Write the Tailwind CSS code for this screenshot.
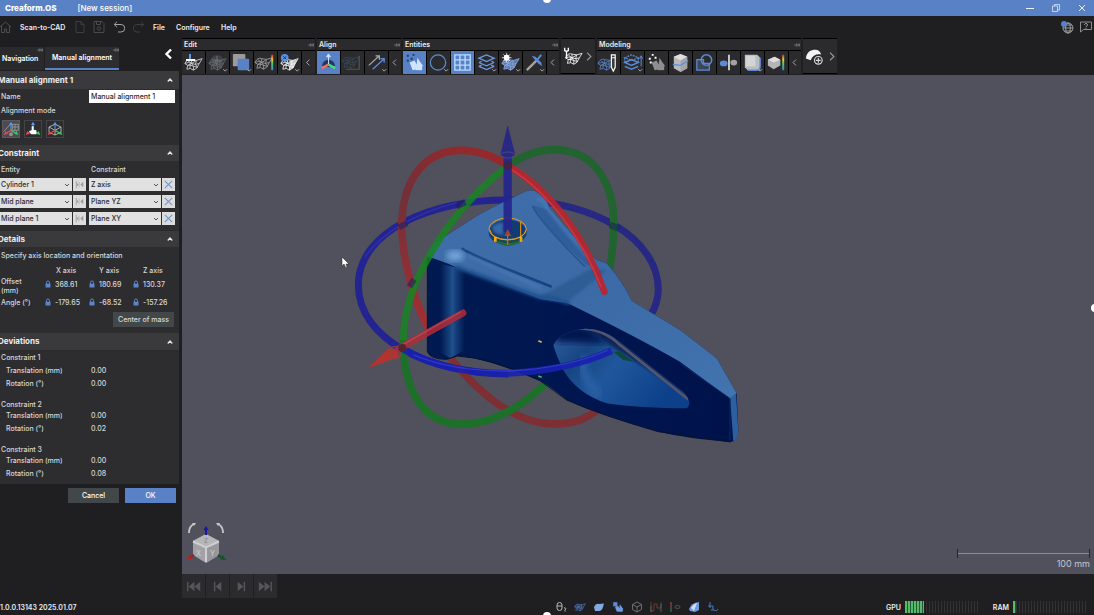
<!DOCTYPE html>
<html lang="en">
<head>
<meta charset="UTF-8" />
<meta name="viewport" content="width=device-width, initial-scale=1.0" />
<title>Creaform.OS - [New session]</title>
<script src="https://cdn.jsdelivr.net/npm/@tailwindcss/browser@4"></script>
</head>

<body class="relative flex h-screen flex-col overflow-hidden bg-[#1f1f21] font-['Inter',sans-serif] text-[7px] font-medium leading-[9px] text-[#d8d8da]">

<!-- shared icon shapes -->
<svg class="hidden">
  <symbol id="mesh" viewBox="0 0 24 24">
    <path d="M3 13Q6 7 10 9Q15 11 21 8L18 13Q16 19 12 20Q9 17 5 19L6 15zM3 13Q7 11 10 13Q14 15 18 13M6 15Q9 14 12 16L16 17M10 9L10 13 12 16 12 20M15 10L14 14 16 17M6 10L10 13 15 10M6 15L10 13M9 14L8 18" fill="none" stroke="currentColor" stroke-width=".9"/>
  </symbol>
  <symbol id="axes" viewBox="0 0 24 24">
    <path d="M12 14V5" stroke="#5b9be8" stroke-width="1.6"/><path d="M12 1l3 5h-6z" fill="#5b9be8"/>
    <path d="M12 14l-7 4" stroke="#e5484d" stroke-width="2"/><path d="M1 21l2.500-6 4 4z" fill="#e5484d"/>
    <path d="M12 14l7 4" stroke="#3cc860" stroke-width="2"/><path d="M23 21l-6.500-2 4-4z" fill="#3cc860"/>
  </symbol>
  <symbol id="more" viewBox="0 0 24 24"><path d="M18 19l2 2 2-2" fill="none" stroke="#a9a9ab"/></symbol>
  <symbol id="pin" viewBox="0 0 8 8"><path d="M0 4h3M3 2v4M3 3h4v2H3M7 2v4" fill="none" stroke="#8c8c8e" stroke-width=".8"/></symbol>
  <symbol id="up" viewBox="0 0 8 8"><path d="M2.200 5.200L4 3.200l1.800 2" fill="none" stroke="#e6e6e8" stroke-width="1"/></symbol>
  <symbol id="down" viewBox="0 0 8 8"><path d="M2 3l2 2 2-2" fill="none" stroke="#444" stroke-width=".9"/></symbol>
  <symbol id="mirror" viewBox="0 0 14 14"><path d="M6.500 4v6" stroke="#b5b5b5"/><path d="M3.500 3v8" stroke="#999" stroke-width=".8"/><path d="M4 5l2 2-2 2zM11 4L8 7l3 3z" fill="#9a9a9c"/></symbol>
  <symbol id="cross" viewBox="0 0 14 14"><path d="M3 3l8 8M11 3l-8 8" stroke="#6e93d2" stroke-width="1.100"/></symbol>
  <symbol id="lock" viewBox="0 0 8 8"><path d="M2.500 4V2.500a1.500 1.500 0 013 0V4" fill="none" stroke="#5b85cc"/><path d="M1.500 3.700h5v3.800h-5z" fill="#5b85cc"/></symbol>
  <symbol id="cube" viewBox="0 0 24 24"><path d="M12 3l7 3v12l-7 4-7-4V6z" fill="#b9b9bb"/><path d="M12 3l7 3-7 4-7-4z" fill="#dededf"/><path d="M12 10l7-4v12l-7 4z" fill="#a5a5a7"/></symbol>
  <symbol id="shapes" viewBox="0 0 24 24"><path d="M15 7l6 9-7 1z"/><path d="M13 14h7v6h-7z"/><path d="M7 12l5-2 3 5-1 4-4 1z"/></symbol>
</svg>

<!-- title bar -->
<header class="flex h-4 shrink-0 items-center bg-[#5882c5] pl-[5px] text-white">
  <h1 class="text-[8px] font-extrabold">Creaform.OS</h1>
  <span class="ml-[21px] text-[8px]">[New session]</span>
  <div class="ml-auto flex items-center gap-[14px] pr-[6px]">
    <button aria-label="Minimize"><svg class="size-3" viewBox="0 0 12 12"><path d="M2 6.500h8" stroke="#fff" stroke-width=".9"/></svg></button>
    <button aria-label="Restore"><svg class="size-3" viewBox="0 0 12 12"><path d="M2.500 4h5v5.500h-5zM4.500 4V2.500h5v5.500h-2" fill="none" stroke="#dfe8f6" stroke-width=".8"/></svg></button>
    <button aria-label="Close"><svg class="size-3" viewBox="0 0 12 12"><path d="M3 3l6 6M9 3L3 9" stroke="#fff" stroke-width=".9"/></svg></button>
  </div>
</header>

<!-- menu bar -->
<nav class="flex h-[22px] shrink-0 items-center text-[7px] font-semibold text-[#ededee]">
  <button class="w-5" aria-label="Home"><svg class="size-3" viewBox="0 0 12 12"><path d="M0 6l5.500-5L11 6M1.500 5v6.500h3V8h2v3.500h3V5" fill="none" stroke="#4d4d50"/></svg></button>
  <a href="#" class="w-[54px]">Scan-to-CAD</a>
  <button class="w-[19px]" aria-label="New"><svg class="size-3" viewBox="0 0 12 12"><path d="M2 .5h5l3 3v8H2zM7 .5v3h3" fill="none" stroke="#3e3e41"/></svg></button>
  <button class="w-5" aria-label="Save"><svg class="size-3" viewBox="0 0 12 12"><path d="M1 .5h8l2 2v9H1zM3.500.5v3h4v-3" fill="none" stroke="#4a4a4d"/><circle cx="6" cy="7.500" r="1.700" fill="none" stroke="#4a4a4d"/></svg></button>
  <button class="w-5" aria-label="Undo"><svg class="size-3" viewBox="0 0 12 12"><path d="M4 .8L1.200 3.500 4 6.200M1.500 3.500H8a3.500 3.500 0 010 7.500H5" fill="none" stroke="#a2a2a4"/></svg></button>
  <button class="w-5" aria-label="Redo"><svg class="size-3" viewBox="0 0 12 12"><path d="M8 .8l2.800 2.700L8 6.200M10.500 3.500H4A3.500 3.500 0 004 11h3" fill="none" stroke="#3e3e41"/></svg></button>
  <a href="#" class="w-[23px]">File</a>
  <a href="#" class="w-[45px]">Configure</a>
  <a href="#">Help</a>
  <div class="ml-auto flex items-center gap-[6px] pr-[2px]">
    <button aria-label="Language"><svg class="size-[14px]" viewBox="0 0 14 14"><g fill="none" stroke="#a5a5a7" stroke-width=".9"><circle cx="8" cy="8" r="5"/><ellipse cx="8" cy="8" rx="2.300" ry="5"/><path d="M3 8h10M4 5h8M4 11h8"/></g><circle cx="4" cy="4" r="3" fill="#5882c5"/></svg></button>
    <button aria-label="Support"><svg class="size-3" viewBox="0 0 12 12"><path d="M.5 1h11v7.500h-8L.5 11z" fill="none" stroke="#8e8e90"/><path d="M4.500 4c0-2 3-2 3 0 0 1-1.500 1-1.500 2M6 6.800v1" fill="none" stroke="#bbb" stroke-width=".9"/></svg></button>
  </div>
</nav>

<main class="flex min-h-0 flex-1">

  <!-- side panel -->
  <aside class="mr-[2px] w-[180px] shrink-0">
    <div class="flex h-[33px] items-end pb-px text-[7px] font-semibold text-white">
      <button class="relative h-[23px] w-[44px] bg-[#2a2a2c] pl-[2px] text-left">Navigation<svg class="absolute top-0 right-px size-[6px]"><use href="#pin"/></svg></button>
      <button class="relative ml-px h-[23px] w-[74px] border-b-2 border-[#5882c5] bg-[#2d2d2f] text-center">Manual alignment<svg class="absolute top-0 right-0 size-[6px]"><use href="#pin"/></svg></button>
      <button class="mb-[8px] ml-auto mr-[7px]" aria-label="Collapse panel"><svg class="h-4 w-[10px]" viewBox="0 0 10 16"><path d="M8 3.500L3.500 8 8 12.500" fill="none" stroke="#fff" stroke-width="2.400"/></svg></button>
    </div>

    <div class="w-[179px] bg-[#2d2d2f]">
      <section class="h-[74px]">
        <h2 class="flex h-[18px] items-center justify-between bg-[#3a3a3c] pr-1 text-[8px] font-bold text-[#ececee]"><span class="-ml-[2px]">Manual alignment 1</span><svg class="size-[10px]"><use href="#up"/></svg></h2>
        <div class="mt-px flex items-center pl-px">
          <label for="name" class="w-[88px]">Name</label>
          <input id="name" value="Manual alignment 1" class="h-[13px] w-[86px] bg-white px-[2px] text-[#2b2b2d]">
        </div>
        <p class="mt-[3px] pl-px">Alignment mode</p>
        <div class="mt-[5px] flex gap-1 pl-[2px]">
          <button class="size-[18px] border border-[#5a5a62] bg-[#4b4b53]" aria-label="Entities"><svg class="size-4" viewBox="0 0 24 24"><path d="M1 16L10 6M14 5h9v9h-9zM18 5v9M14 9h9" fill="none" stroke="#9a9a9d" stroke-width="1.300"/><circle cx="12" cy="20" r="3" fill="#909093"/><use href="#axes"/></svg></button>
          <button class="size-[18px] border border-[#444448]" aria-label="Pointer"><svg class="size-4" viewBox="0 0 24 24"><use href="#axes"/><path d="M10 8h3v5l4 1v6H9l-3-5 4-1z" fill="#fff"/></svg></button>
          <button class="size-[18px] border border-[#444448]" aria-label="Box"><svg class="size-4" viewBox="0 0 24 24"><path d="M3 9l9-4 9 4v8l-9 4-9-4zM3 9l9 5 9-5M12 14v7" fill="none" stroke="#c0c0c2" stroke-width="1.300"/><use href="#axes"/></svg></button>
        </div>
      </section>

      <section class="h-[86px]">
        <h2 class="flex h-4 items-center justify-between bg-[#3a3a3c] pr-1 text-[8px] font-bold text-[#ececee]"><span class="-ml-[2px]">Constraint</span><svg class="size-[10px]"><use href="#up"/></svg></h2>
        <div class="grid h-[17px] grid-cols-2 items-center gap-[2px] pl-px"><span>Entity</span><span>Constraint</span></div>
        <div class="space-y-1 text-[#2b2b2d]">
          <div class="flex h-[13px]">
            <div class="relative"><select aria-label="Entity 1" class="h-[13px] w-[72px] appearance-none bg-[#e1e1e1] pl-px"><option>Cylinder 1</option></select><svg class="pointer-events-none absolute right-px top-[3px] size-2"><use href="#down"/></svg></div>
            <button class="ml-px w-[13px] bg-[#dcdcdc]" aria-label="Flip 1"><svg class="size-[13px]"><use href="#mirror"/></svg></button>
            <div class="relative ml-[3px]"><select aria-label="Constraint 1" class="h-[13px] w-[72px] appearance-none bg-[#e1e1e1] pl-[2px]"><option>Z axis</option></select><svg class="pointer-events-none absolute right-px top-[3px] size-2"><use href="#down"/></svg></div>
            <button class="ml-px w-[13px] bg-[#dcdcdc]" aria-label="Remove 1"><svg class="size-[13px]"><use href="#cross"/></svg></button>
          </div>
          <div class="flex h-[13px]">
            <div class="relative"><select aria-label="Entity 2" class="h-[13px] w-[72px] appearance-none bg-[#e1e1e1] pl-px"><option>Mid plane</option></select><svg class="pointer-events-none absolute right-px top-[3px] size-2"><use href="#down"/></svg></div>
            <button class="ml-px w-[13px] bg-[#dcdcdc]" aria-label="Flip 2"><svg class="size-[13px]"><use href="#mirror"/></svg></button>
            <div class="relative ml-[3px]"><select aria-label="Constraint 2" class="h-[13px] w-[72px] appearance-none bg-[#e1e1e1] pl-[2px]"><option>Plane YZ</option></select><svg class="pointer-events-none absolute right-px top-[3px] size-2"><use href="#down"/></svg></div>
            <button class="ml-px w-[13px] bg-[#dcdcdc]" aria-label="Remove 2"><svg class="size-[13px]"><use href="#cross"/></svg></button>
          </div>
          <div class="flex h-[13px]">
            <div class="relative"><select aria-label="Entity 3" class="h-[13px] w-[72px] appearance-none bg-[#e1e1e1] pl-px"><option>Mid plane 1</option></select><svg class="pointer-events-none absolute right-px top-[3px] size-2"><use href="#down"/></svg></div>
            <button class="ml-px w-[13px] bg-[#dcdcdc]" aria-label="Flip 3"><svg class="size-[13px]"><use href="#mirror"/></svg></button>
            <div class="relative ml-[3px]"><select aria-label="Constraint 3" class="h-[13px] w-[72px] appearance-none bg-[#e1e1e1] pl-[2px]"><option>Plane XY</option></select><svg class="pointer-events-none absolute right-px top-[3px] size-2"><use href="#down"/></svg></div>
            <button class="ml-px w-[13px] bg-[#dcdcdc]" aria-label="Remove 3"><svg class="size-[13px]"><use href="#cross"/></svg></button>
          </div>
        </div>
      </section>

      <section class="h-[102px]">
        <h2 class="flex h-4 items-center justify-between bg-[#3a3a3c] pr-1 text-[8px] font-bold text-[#ececee]"><span class="-ml-[2px]">Details</span><svg class="size-[10px]"><use href="#up"/></svg></h2>
        <p class="mt-1 pl-px">Specify axis location and orientation</p>
        <table class="mt-[3px] w-[176px] table-fixed text-left">
          <thead>
            <tr class="h-[14px]"><th class="p-0"></th><th class="p-0 pl-[12px] font-medium">X axis</th><th class="p-0 pl-[11px] font-medium">Y axis</th><th class="p-0 pl-[11px] font-medium">Z axis</th></tr>
          </thead>
          <tbody>
            <tr class="h-[18px]">
              <th class="p-0 pl-px pr-2 font-medium leading-[9px]">Offset (mm)</th>
              <td class="p-0 pb-1"><span class="flex items-center gap-[3px]"><svg class="size-2"><use href="#lock"/></svg>368.61</span></td>
              <td class="p-0 pb-1"><span class="flex items-center gap-[3px]"><svg class="size-2"><use href="#lock"/></svg>180.69</span></td>
              <td class="p-0 pb-1"><span class="flex items-center gap-[3px]"><svg class="size-2"><use href="#lock"/></svg>130.37</span></td>
            </tr>
            <tr class="h-[14px]">
              <th class="p-0 pl-px font-medium">Angle (°)</th>
              <td class="p-0"><span class="flex items-center gap-[3px]"><svg class="size-2"><use href="#lock"/></svg>-179.65</span></td>
              <td class="p-0"><span class="flex items-center gap-[3px]"><svg class="size-2"><use href="#lock"/></svg>-68.52</span></td>
              <td class="p-0"><span class="flex items-center gap-[3px]"><svg class="size-2"><use href="#lock"/></svg>-157.26</span></td>
            </tr>
          </tbody>
        </table>
        <button class="ml-auto mr-[5px] mt-[3px] block h-[15px] w-[61px] bg-[#424749] text-center">Center of mass</button>
      </section>

      <section class="h-[151px]">
        <h2 class="flex h-[17px] items-center justify-between bg-[#3a3a3c] pr-1 text-[8px] font-bold text-[#ececee]"><span class="-ml-[2px]">Deviations</span><svg class="size-[10px]"><use href="#up"/></svg></h2>
        <div class="space-y-3 pl-px pt-[3px]">
          <div>
            <h3>Constraint 1</h3>
            <dl class="mt-1 grid grid-cols-[85px_1fr] gap-y-1 pl-[5px]"><dt>Translation (mm)</dt><dd>0.00</dd><dt>Rotation (°)</dt><dd>0.00</dd></dl>
          </div>
          <div>
            <h3>Constraint 2</h3>
            <dl class="mt-[2px] grid grid-cols-[85px_1fr] gap-y-1 pl-[5px]"><dt>Translation (mm)</dt><dd>0.00</dd><dt>Rotation (°)</dt><dd>0.02</dd></dl>
          </div>
          <div>
            <h3>Constraint 3</h3>
            <dl class="mt-[2px] grid grid-cols-[85px_1fr] gap-y-1 pl-[5px]"><dt>Translation (mm)</dt><dd>0.00</dd><dt>Rotation (°)</dt><dd>0.08</dd></dl>
          </div>
        </div>
      </section>
    </div>

    <div class="flex justify-end gap-[6px] pr-1 pt-1 text-white">
      <button class="h-[15px] w-[51px] bg-[#424749]">Cancel</button>
      <button class="h-[15px] w-[51px] bg-[#5882c5]">OK</button>
    </div>
  </aside>

  <div class="flex min-w-0 flex-1 flex-col">

    <!-- tool bar -->
    <div class="flex h-[37px] shrink-0 gap-[2px] pb-px text-[7px] font-semibold text-[#ececee]">
      <section class="bg-black pt-px">
        <h2 class="flex h-[11px] items-center justify-between bg-[#2b2b2d] pl-[2px] pr-px">Edit<svg class="size-[6px]"><use href="#pin"/></svg></h2>
        <div class="flex gap-px pt-px">
          <button class="size-[23px] bg-[#2b2b2d]" aria-label="Import mesh"><svg class="size-[23px] text-[#d0d0d2]"><use href="#mesh"/><path d="M8 3v6" stroke="#5b9be8" stroke-width="2"/><path d="M4 8h9v2H4z" fill="#fff"/></svg></button>
          <button class="size-[23px] bg-[#2b2b2d]" aria-label="Clean"><svg class="size-[23px] text-[#66686c]"><circle cx="11" cy="11" r="7" fill="#3d4148"/><use href="#mesh"/><path d="M11 5v9M7 10h9" stroke="#6e7178"/><use href="#more"/></svg></button>
          <button class="size-[23px] bg-[#2b2b2d]" aria-label="Boolean"><svg class="size-[23px]" viewBox="0 0 24 24"><rect x="3" y="3" width="13" height="13" rx="1" fill="#9b9b9d"/><rect x="8" y="8" width="12" height="12" rx="1" fill="#5882c5"/><use href="#more"/></svg></button>
          <button class="size-[23px] bg-[#2b2b2d]" aria-label="Color map"><svg class="size-[23px] text-[#9d9da0]" viewBox="0 0 24 24"><defs><linearGradient id="heat" x2="0" y2="1"><stop stop-color="#e33"/><stop offset=".3" stop-color="#ec3"/><stop offset=".6" stop-color="#4c6"/><stop offset="1" stop-color="#48e"/></linearGradient></defs><use href="#mesh" x="-2" y="-1"/><rect x="18" y="4" width="2" height="16" fill="url(#heat)"/></svg></button>
          <button class="size-[23px] bg-[#2b2b2d]" aria-label="Remove mesh"><svg class="size-[23px] text-[#f1f1f2]" viewBox="0 0 24 24"><path d="M12 10l8-1-4 9-4 1z" fill="#c8c8ca"/><use href="#mesh"/><circle cx="7" cy="7" r="4" fill="#5b93e0"/><path d="M5.500 5.500l3 3M8.500 5.500l-3 3" stroke="#163260"/><use href="#more"/></svg></button>
          <button class="h-[23px] w-[13px] bg-[#2b2b2d]" aria-label="Collapse Edit"><svg class="h-[23px] w-[13px]" viewBox="0 0 12 24"><path d="M7 9l-3 3 3 3" fill="none" stroke="#aaa"/></svg></button>
        </div>
      </section>

      <section class="bg-black pt-px">
        <h2 class="flex h-[11px] items-center justify-between bg-[#2b2b2d] pl-[2px] pr-px">Align<svg class="size-[6px]"><use href="#pin"/></svg></h2>
        <div class="flex gap-px pt-px">
          <button class="size-[23px] bg-[#5882c5]" aria-label="Manual alignment"><svg class="size-[23px]" viewBox="0 0 24 24"><path d="M5 15c1-4 4-6 7-6s6 2 7 6l-7 2z" fill="#26395c"/><path d="M12 14V5M12 3l-2 3h4z" stroke="#cde2ff" fill="#cde2ff"/><path d="M12 14l-7 4" stroke="#ff6b5f" stroke-width="2.500"/><path d="M12 14l7 4" stroke="#42e07a" stroke-width="2.500"/></svg></button>
          <button class="size-[23px] bg-[#2b2b2d]" aria-label="Best fit"><svg class="size-[23px] text-[#3a4656]" viewBox="0 0 24 24"><use href="#mesh" x="-2" y="-2"/><path d="M5 19h14V5" fill="none" stroke="#56565a" stroke-width="1.200"/></svg></button>
          <button class="size-[23px] bg-[#2b2b2d]" aria-label="Transform"><svg class="size-[23px]" viewBox="0 0 24 24"><path d="M4 15L15 5M11 5h4v4" fill="none" stroke="#a8a8aa" stroke-width="1.300"/><path d="M8 19L20 8M16 8h4v4" fill="none" stroke="#5b8bd8" stroke-width="1.400"/><use href="#more"/></svg></button>
          <button class="h-[23px] w-3 bg-[#2b2b2d]" aria-label="Collapse Align"><svg class="h-[23px] w-3" viewBox="0 0 12 24"><path d="M7 9l-3 3 3 3" fill="none" stroke="#aaa"/></svg></button>
        </div>
      </section>

      <section class="bg-black pt-px">
        <h2 class="flex h-[11px] items-center justify-between bg-[#2b2b2d] pl-[2px] pr-px">Entities<svg class="size-[6px]"><use href="#pin"/></svg></h2>
        <div class="flex gap-px pt-px">
          <button class="size-[23px] bg-[#5882c5]" aria-label="Extract entities"><svg class="size-[23px]" viewBox="0 0 24 24"><use href="#shapes" fill="#cfe3ff"/><path d="M4 4h2v2H4zM8 7h2v2H8zM10 3h2v2h-2zM4 9h2v2H4z" fill="#22355a"/></svg></button>
          <button class="size-[23px] bg-[#2b2b2d]" aria-label="Circle"><svg class="size-[23px]" viewBox="0 0 24 24"><circle cx="11.500" cy="12" r="8" fill="none" stroke="#5b8bd8" stroke-width="1.300"/><use href="#more"/></svg></button>
          <button class="size-[23px] bg-[#5882c5]" aria-label="Plane grid"><svg class="size-[23px]" viewBox="0 0 24 24"><path d="M4 4h16v16H4zM9.300 4v16M14.700 4v16M4 9.300h16M4 14.700h16" fill="none" stroke="#b9dcff" stroke-width="1.400"/></svg></button>
          <button class="size-[23px] bg-[#2b2b2d]" aria-label="Layers"><svg class="size-[23px]" viewBox="0 0 24 24"><path d="M4 7.500L12 4l8 3.500-8 3.500zM4 12l8 3.500 8-3.500M4 16l8 3.500 8-3.500M4 12l3-1.300M20 12l-3-1.300M4 16l3-1.300M20 16l-3-1.300" fill="none" stroke="#6a9ae6" stroke-width="1.300"/><use href="#more"/></svg></button>
          <button class="size-[23px] bg-[#2b2b2d]" aria-label="Surface"><svg class="size-[23px] text-[#8da7d4]" viewBox="0 0 24 24"><path d="M3 13Q6 7 10 9Q15 11 21 8L18 13Q16 19 12 20Q9 17 5 19L6 15z" fill="#5579b5"/><use href="#mesh"/><circle cx="8" cy="7" r="3" fill="#fff"/><path d="M8 2v10M3 7h10M4.500 3.500l7 7M11.500 3.500l-7 7" stroke="#fff" stroke-width=".8"/><use href="#more"/></svg></button>
          <button class="size-[23px] bg-[#2b2b2d]" aria-label="Caliper"><svg class="size-[23px]" viewBox="0 0 24 24"><path d="M4 20L14 10" stroke="#a8a49c" stroke-width="2.400"/><path d="M9 5l4 1 6 6 1 4-4-3-3-3z" fill="#5b8bd8"/><path d="M15 9l4-5" stroke="#5b8bd8" stroke-width="2"/><use href="#more"/></svg></button>
          <button class="h-[23px] w-3 bg-[#2b2b2d]" aria-label="Collapse Entities"><svg class="h-[23px] w-3" viewBox="0 0 12 24"><path d="M7 9l-3 3 3 3" fill="none" stroke="#aaa"/></svg></button>
        </div>
      </section>

      <section class="bg-black py-px">
        <button class="flex h-[34px] w-[34px] items-center bg-[#2b2b2d]" aria-label="Mesh tools"><svg class="size-[22px] text-white" viewBox="0 0 24 24"><use href="#mesh" x="2" y="1"/><path d="M4 3v3l2 1 2-1V3M6 7v8" fill="none" stroke="#fff" stroke-width="1.500"/></svg><svg class="h-[23px] w-3" viewBox="0 0 12 24"><path d="M4 8l4 4-4 4" fill="none" stroke="#999" stroke-width="1.200"/></svg></button>
      </section>

      <section class="bg-black pt-px">
        <h2 class="flex h-[11px] items-center justify-between bg-[#2b2b2d] pl-[2px] pr-px">Modeling<svg class="size-[6px]"><use href="#pin"/></svg></h2>
        <div class="flex gap-px pt-px">
          <button class="size-[23px] bg-[#2b2b2d]" aria-label="Sketch"><svg class="size-[23px] text-[#5680c4]" viewBox="0 0 24 24"><use href="#mesh" x="-2"/><path d="M15 4h4v13l-2 4-2-4zM15 7h4" fill="#3a3a3c" stroke="#fff" stroke-width="1.200"/></svg></button>
          <button class="size-[23px] bg-[#2b2b2d]" aria-label="Offset"><svg class="size-[23px]" viewBox="0 0 24 24"><path d="M4 7l7-3 7 3-7 3zM4 7v6M18 7v6" fill="none" stroke="#5b8bd8" stroke-width="1.300" stroke-dasharray="2 1"/><path d="M4 12l7-3 7 3-7 3zM4 16l7 3 7-3" fill="none" stroke="#5b8bd8" stroke-width="1.500"/><path d="M21 16V6M19.500 8L21 5l1.500 3" fill="none" stroke="#5b8bd8"/><use href="#more"/></svg></button>
          <button class="size-[23px] bg-[#2b2b2d]" aria-label="Primitives"><svg class="size-[23px]" viewBox="0 0 24 24"><use href="#shapes" fill="#8f8f92"/><path d="M4 7h2v2H4zM7 3h2v2H7zM10 6h2v2h-2zM5 11h2v2H5z" fill="#fff"/></svg></button>
          <button class="size-[23px] bg-[#2b2b2d]" aria-label="Cut solid"><svg class="size-[23px]" viewBox="0 0 24 24"><use href="#cube"/><path d="M4 14l8 1 8-5" fill="none" stroke="#5b93e0" stroke-width="1.500"/></svg></button>
          <button class="size-[23px] bg-[#2b2b2d]" aria-label="Combine"><svg class="size-[23px]" viewBox="0 0 24 24"><path d="M4 9h7v4h6v7H4z" fill="#3c4657" stroke="#5b8bd8" stroke-width="1.300"/><circle cx="14" cy="9.500" r="5.500" fill="none" stroke="#5b8bd8" stroke-width="1.500"/></svg></button>
          <button class="size-[23px] bg-[#2b2b2d]" aria-label="Mirror"><svg class="size-[23px]" viewBox="0 0 24 24"><ellipse cx="7" cy="13" rx="4" ry="3" fill="#5b8bd8"/><ellipse cx="17.500" cy="12" rx="3.500" ry="3" fill="#a2a2a4"/><path d="M12.500 4v16" stroke="#fff" stroke-width="1.500"/></svg></button>
          <button class="size-[23px] bg-[#2b2b2d]" aria-label="Fillet"><svg class="size-[23px]" viewBox="0 0 24 24"><path d="M4 4h13l3 3v13H7l-3-3z" fill="#bcbcbe"/><path d="M5 5h10v11H5z" fill="#d4d4d6"/><path d="M20 7v9q0 4-4 4H7" fill="none" stroke="#5b8bd8" stroke-width="1.500"/><use href="#more"/></svg></button>
          <button class="size-[23px] bg-[#2b2b2d]" aria-label="Solid deviation"><svg class="size-[23px]" viewBox="0 0 24 24"><path d="M3 9l7-3 6 3v6l-7 4-6-4z" fill="#b4b4b6"/><path d="M3 9l7-3 6 3-7 3z" fill="#dededf"/><rect x="18" y="4" width="2" height="16" fill="url(#heat)"/></svg></button>
          <button class="h-[23px] w-3 bg-[#2b2b2d]" aria-label="Collapse Modeling"><svg class="h-[23px] w-3" viewBox="0 0 12 24"><path d="M7 9l-3 3 3 3" fill="none" stroke="#aaa"/></svg></button>
        </div>
      </section>

      <section class="bg-black py-px">
        <button class="flex h-[34px] w-[34px] items-center bg-[#2b2b2d]" aria-label="Add surface"><svg class="size-[23px]" viewBox="0 0 24 24"><path d="M3 14c1-7 5-9 10-9 3 0 5 2 6 5-5-1-9 1-11 6z" fill="#f3f3f4"/><circle cx="16" cy="16" r="4" fill="#2b2b2d" stroke="#ddd" stroke-width="1.200"/><path d="M16 13.500v5M13.500 16h5" stroke="#ddd" stroke-width="1.200"/></svg><svg class="h-[23px] w-[10px]" viewBox="0 0 10 24"><path d="M4 8l4 4-4 4" fill="none" stroke="#999" stroke-width="1.200"/></svg></button>
      </section>
    </div>

    <!-- 3D view -->
    <div class="relative min-h-0 flex-1 bg-[#51515d]">
      <svg class="absolute inset-0 size-full" viewBox="182 75 912 499" preserveAspectRatio="xMidYMid meet">
        <defs>
          <linearGradient id="top" x1="0" y1="0" x2="1" y2="1"><stop stop-color="#3f6ea9"/><stop offset=".5" stop-color="#3b6aa6"/><stop offset="1" stop-color="#4374b0"/></linearGradient>
          <linearGradient id="side" x1="0" x2="1"><stop stop-color="#001a50"/><stop offset=".45" stop-color="#001650"/><stop offset="1" stop-color="#00124a"/></linearGradient>
          <linearGradient id="edge" x1="0" x2="1"><stop stop-color="#174785" stop-opacity="0"/><stop offset=".5" stop-color="#20508c"/><stop offset="1" stop-color="#174785" stop-opacity="0"/></linearGradient>
          <linearGradient id="pocket" x1="0" x2="1" y2=".5"><stop stop-color="#315f9e"/><stop offset=".3" stop-color="#174582"/><stop offset=".55" stop-color="#20579c"/><stop offset="1" stop-color="#0d408a"/></linearGradient>
          <linearGradient id="redBack" gradientUnits="userSpaceOnUse" x1="185" y1="655" x2="400" y2="120"><stop stop-color="#a52f33"/><stop offset=".65" stop-color="#713039"/><stop offset="1" stop-color="#94292c"/></linearGradient>
          <filter id="soft"><feGaussianBlur stdDeviation="5"/></filter>
          <filter id="soft2"><feGaussianBlur stdDeviation="10"/></filter>
          <clipPath id="pocketClip"><path d="M640 705Q660 665 735 656Q790 655 840 695L1030 845Q1060 880 1040 895Q900 895 800 880Q710 850 670 780Q650 740 640 705z"/></clipPath>
        </defs>

        <g transform="translate(340 110) scale(.33333)" fill="none">
          <!-- ring parts behind the part -->
          <path d="M535 271L505 270C270 268 55 365 55 525C55 690 270 792 505 792" stroke="#232391" stroke-width="21"/>
          <path d="M535 271C760 275 955 385 955 540Q953 580 935 610" stroke="#272784" stroke-width="21"/>
          <path d="M265 655C215 560 185 430 185 340C190 200 260 120 365 121Q440 122 505 168" stroke="url(#redBack)" stroke-width="23"/>
          <path d="M325 735C430 870 540 942 640 942Q730 942 775 895" stroke="#7e2f33" stroke-width="23"/>
          <path d="M505 168Q570 120 645 119C770 120 822 230 822 345Q820 420 808 480" stroke="#226430" stroke-width="23"/>
          <path d="M190 690C190 820 235 942 365 943Q500 940 625 812" stroke="#1d7029" stroke-width="23"/>

          <!-- solid part -->
          <path d="M262 440Q265 412 290 395L415 315Q500 270 560 243Q580 236 600 252Q622 265 628 295Q700 380 770 450L800 460Q845 510 875 572L1020 660L1130 745L1190 850L1195 960Q1193 995 1172 996Q1040 985 955 965Q780 915 680 870Q640 835 600 812Q440 745 352 738L320 748Q270 745 263 725z" fill="url(#side)"/>
          <path d="M262 440Q265 412 290 395L415 315Q500 270 560 243Q580 236 600 252Q622 265 628 295Q700 380 770 450L800 460Q845 510 875 572L1020 660L1130 745L1190 850L1172 868L1020 755Q880 675 680 578Q640 574 600 566L345 470Q300 450 262 440z" fill="url(#top)"/>
          <path d="M575 285Q590 330 740 465L775 470Q700 380 625 300z" fill="#2f5e9b"/>
          <path d="M590 270Q605 260 618 290Q680 370 750 445" stroke="#467ab8" stroke-width="8" filter="url(#soft)"/>
          <path d="M578 290Q600 335 735 470" stroke="#2a5591" stroke-width="5"/>
          <path d="M600 560L750 478L800 480L690 570z" fill="#2f5b94" filter="url(#soft)"/>
          <path d="M365 415Q400 440 635 530" stroke="#164482" stroke-width="8"/>
          <path d="M380 435L605 535" stroke="#4475b2" stroke-width="10" filter="url(#soft)"/>
          <path d="M345 470L600 562Q650 565 690 580" stroke="#1e508d" stroke-width="12" filter="url(#soft)"/>
          <path d="M300 460L375 480V720L330 745L300 725z" fill="url(#edge)"/>
          <ellipse cx="345" cy="437" rx="27" ry="16" fill="#76a5db" filter="url(#soft2)"/>
          <path d="M262 440V725Q270 748 320 748L352 738Q450 742 600 812L680 870Q780 915 955 965L1172 996" stroke="#07132c" stroke-width="3"/>
          <path d="M1170 865L1188 850L1195 960Q1194 990 1180 994z" fill="#2c5f9f"/>
          <path d="M640 705Q660 665 735 656Q790 655 840 695L1030 845Q1060 880 1040 895Q900 895 800 880Q710 850 670 780Q650 740 640 705z" fill="url(#pocket)"/>
          <g clip-path="url(#pocketClip)">
            <path d="M630 650Q740 640 810 705L1050 860L1080 800L840 630z" fill="#0b2557" filter="url(#soft)"/>
            <path d="M630 640L740 650L800 700L650 695z" fill="#001650" filter="url(#soft2)"/>
            <path d="M715 655Q790 655 840 705L1045 868" stroke="#50546f" stroke-width="9"/>
            <path d="M730 740Q715 790 780 860" stroke="#2a61a5" stroke-width="26" filter="url(#soft2)"/>
            <path d="M820 725L850 750L880 755L840 725z" fill="#0e483b"/>
          </g>
          <path d="M1020 760L1170 865V990" stroke="#0b2a61" stroke-width="3"/>

          <!-- hole with its fitted cylinder -->
          <ellipse cx="503" cy="367" rx="57" ry="38" fill="#123b73"/>
          <path d="M455 352Q470 335 490 338V375Q460 375 455 352z" fill="#3468a8" filter="url(#soft)"/>
          <path d="M450 370Q460 405 503 407Q550 405 558 370Q540 392 503 389Q465 390 450 370z" fill="#1a4a50"/>
          <path d="M470 392Q503 408 540 392V398Q503 412 470 398z" fill="#217034"/>
          <ellipse cx="503" cy="357" rx="56" ry="33" stroke="#e39b28" stroke-width="3"/>
          <path d="M450 360Q455 387 503 389Q552 387 558 360M542 335v60M462 335v4" stroke="#f19a13" stroke-width="3"/>
          <path d="M466 380v15M543 380v15" stroke="#ffa800" stroke-width="8"/>

          <!-- ring parts in front -->
          <path d="M505 168C360 270 190 500 190 690" stroke="#178421" stroke-width="21" stroke-opacity=".85"/>
          <path d="M505 168C630 240 735 380 793 545" stroke="#bd242b" stroke-width="20" stroke-opacity=".9" stroke-linecap="round"/>
          <path d="M510 176C630 250 725 385 783 530" stroke="#dc5055" stroke-width="4" stroke-opacity=".5"/>
          <path d="M185 715Q320 792 505 790Q690 780 815 722" stroke="#1820b0" stroke-width="21" stroke-opacity=".9"/>
          <path d="M220 735Q340 784 505 783Q680 775 805 720" stroke="#4c55dd" stroke-width="4" stroke-opacity=".5"/>
          <path d="M350 278Q155 330 75 440" stroke="#3c3cb0" stroke-width="4" stroke-opacity=".6"/>

          <!-- ring crossings -->
          <path d="M176 352L202 340M208 530L222 508M350 290L376 276" stroke="#251c62" stroke-width="18" stroke-opacity=".6"/>
          <path d="M810 345L836 355" stroke="#15304f" stroke-width="20" stroke-opacity=".7"/>

          <!-- axis arrows -->
          <path d="M503 135V365" stroke="#25258c" stroke-width="25" stroke-opacity=".92"/>
          <path d="M503 45L526 135Q503 148 481 135z" fill="#292983"/>
          <ellipse cx="503" cy="135" rx="21" ry="9" stroke="#47477e" stroke-width="3"/>
          <circle cx="504" cy="167" r="13" fill="#3f2348"/>
          <path d="M493 378L503 357L514 378z" fill="#9c4825"/><path d="M503 375V405" stroke="#d65e20" stroke-width="4"/>
          <path d="M369 609L175 717" stroke="#b22c37" stroke-width="21" stroke-opacity=".85" stroke-linecap="round"/>
          <path d="M363 605L190 703" stroke="#ce5a62" stroke-width="4" stroke-opacity=".5"/>
          <path d="M85 774L145 715Q172 715 177 740z" fill="#b23431"/>
          <ellipse cx="166" cy="728" rx="16" ry="19" stroke="#8c4444" stroke-width="3" transform="rotate(-30 166 728)"/>
          <circle cx="187" cy="714" r="12" fill="#542332"/>
          <path d="M595 692l10 5" stroke="#e6b04c" stroke-width="5"/><path d="M595 798l10 4" stroke="#4fb382" stroke-width="5"/>
        </g>

        <!-- pointer -->
        <path d="M342 257v9l2-2 2 4 1-1-1-3h3z" fill="#fff" stroke="#222" stroke-width=".5"/>

        <!-- view cube -->
        <g>
          <path d="M193 541l13-7 13 7v14l-13 8-13-8z" fill="#a2a2a6"/>
          <path d="M193 541l13-7 13 7-13 6z" fill="#b6b6ba"/>
          <path d="M206 547l13-6v14l-13 8z" fill="#98989c"/>
          <path d="M193 541.500l13 6 13-6M206 547v15" fill="none" stroke="#cfcfd2" stroke-width="2"/>
          <path d="M206 535v-6" stroke="#1616ac" stroke-width="2"/><path d="M206 526l2.500 4h-5z" fill="#1616ac"/>
          <path d="M194 555l-4 2.500" stroke="#a32020" stroke-width="2.500"/><path d="M186 560l3-4.500 2.500 4z" fill="#b82424"/>
          <path d="M218 555l4 2.500" stroke="#0e5522" stroke-width="2.500"/><path d="M226 560l-5.500-.5 2.500-4z" fill="#0e5522"/>
          <path d="M189 533q0-7 5-9M223 533q0-7-5-9" fill="none" stroke="#c6c6c9" stroke-width="1.800"/>
          <path d="M192 523l4 0-2 3zM220 523l-4 0 2 3z" fill="#c6c6c9"/>
          <text x="196" y="556" font-size="7" fill="#c7c7cb">X</text><text x="210" y="556" font-size="7" fill="#c7c7cb">Y</text><text x="204" y="543" font-size="6" fill="#88888e">Z</text>
        </g>
      </svg>

      <!-- scale -->
      <div class="absolute bottom-1 right-1 w-[133px] text-right text-[9px] font-normal leading-[12px] text-[#c5c5c9]">
        <div class="flex h-[9px] items-center border-x border-[#26262a]"><span class="h-px w-full bg-[#8b8b90]"></span></div>
        100 mm
      </div>
    </div>

    <!-- playback -->
    <div class="flex h-[24px] shrink-0 gap-px">
      <button class="w-[23px] bg-[#2b2b2d]" aria-label="First"><svg class="size-[23px]" viewBox="0 0 24 24"><path d="M6 7v10" stroke="#55565a" stroke-width="1.500"/><path d="M13 7v10l-6-5zM19 7v10l-6-5z" fill="#55565a"/></svg></button>
      <button class="w-[23px] bg-[#2b2b2d]" aria-label="Previous"><svg class="size-[23px]" viewBox="0 0 24 24"><path d="M9 7v10" stroke="#55565a" stroke-width="1.500"/><path d="M16 7v10l-6-5z" fill="#55565a"/></svg></button>
      <button class="w-[23px] bg-[#2b2b2d]" aria-label="Next"><svg class="size-[23px]" viewBox="0 0 24 24"><path d="M15 7v10" stroke="#55565a" stroke-width="1.500"/><path d="M8 7v10l6-5z" fill="#55565a"/></svg></button>
      <button class="w-[23px] bg-[#2b2b2d]" aria-label="Last"><svg class="size-[23px]" viewBox="0 0 24 24"><path d="M18 7v10" stroke="#55565a" stroke-width="1.500"/><path d="M5 7v10l6-5zM11 7v10l6-5z" fill="#55565a"/></svg></button>
    </div>
  </div>
</main>

<!-- status bar -->
<footer class="grid h-[17px] shrink-0 grid-cols-3 items-center pt-px text-[7px] font-semibold text-[#ececee]">
  <span>1.0.0.13143 2025.01.07</span>
  <div class="flex justify-end gap-[7px] pr-[10px]">
    <button aria-label="Mouse help"><svg class="size-3" viewBox="0 0 12 12"><path d="M2 4a2.500 2.500 0 015 0v3a2.500 2.500 0 01-5 0zM2 5h5M9 7c2-1 2 1 1 2v1.500" fill="none" stroke="#b9b9bb"/></svg></button>
    <button aria-label="Show mesh"><svg class="size-3 text-[#5b8bd8]" viewBox="2 4 20 19"><use href="#mesh"  width="24" height="24"/></svg></button>
    <button aria-label="Show surface"><svg class="size-3" viewBox="0 0 12 12"><path d="M1 6Q3 2 6 3L11 2.500 10 6Q9 10 6 10L2 10z" fill="#82a9e2"/></svg></button>
    <button aria-label="Show entities"><svg class="size-3" viewBox="2 2 20 20"><path d="M4 4h7v7H4z" fill="#5b8bd8"/><use href="#shapes" width="24" height="24" fill="#6f9be0"/></svg></button>
    <button aria-label="Show box"><svg class="size-3" viewBox="0 0 12 12"><path d="M6 1l4.500 2.500v5L6 11 1.500 8.500v-5zM1.500 3.500L6 6l4.500-2.500M6 6v5" fill="none" stroke="#77777a" stroke-width=".9"/></svg></button>
    <button aria-label="Profile"><svg class="size-3" viewBox="0 0 12 12"><path d="M1 11V1M1 10h3V3h3v4h4V1" fill="none" stroke="#6b3a3b"/><path d="M1 5v6M11 3v8" stroke="#3b6b55"/></svg></button>
    <button aria-label="Color scale"><svg class="size-3" viewBox="0 0 12 12"><path d="M2 1v5" stroke="#8a3d38" stroke-width="1.500"/><path d="M2 6v5" stroke="#2d6846" stroke-width="1.500"/><ellipse cx="8.500" cy="6" rx="2.500" ry="1.500" fill="none" stroke="#505053"/></svg></button>
    <button aria-label="Section"><svg class="size-3" viewBox="0 0 12 12"><path d="M1 8Q3 2 11 1v8l-4 2-5-1z" fill="#6f9be0"/><path d="M3 7Q5 3 9 2L6 10z" fill="#d3dced"/></svg></button>
    <button aria-label="Measure"><svg class="size-3" viewBox="0 0 12 12"><path d="M3 1v6M1 5h5v4M4 9h3c2 1 3 1 4-1" fill="none" stroke="#4a79c4"/></svg></button>
  </div>
  <div class="flex items-center justify-end pr-[6px]">
    <span class="mr-[4px]">GPU</span>
    <div class="flex h-3 w-[75px] bg-[repeating-linear-gradient(90deg,#303234_0_1px,#1f1f21_1px_3px)]"><span class="bg-[repeating-linear-gradient(90deg,#55bb69_0_2px,#275a34_2px_3px)]" style="width:26%"></span></div>
    <span class="ml-[13px] mr-[4px]">RAM</span>
    <div class="flex h-3 w-[75px] bg-[repeating-linear-gradient(90deg,#303234_0_1px,#1f1f21_1px_3px)]"><span class="bg-[repeating-linear-gradient(90deg,#55bb69_0_2px,#275a34_2px_3px)]" style="width:4%"></span></div>
  </div>
</footer>

<!-- window resize grips -->
<span class="absolute -top-[5px] left-1/2 size-2 -translate-x-1/2 rounded-full bg-white"></span>
<span class="absolute -bottom-[5px] left-1/2 size-2 -translate-x-1/2 rounded-full bg-white"></span>
<span class="absolute -right-[5px] top-1/2 size-2 -translate-y-1/2 rounded-full bg-white"></span>
</body>
</html>
